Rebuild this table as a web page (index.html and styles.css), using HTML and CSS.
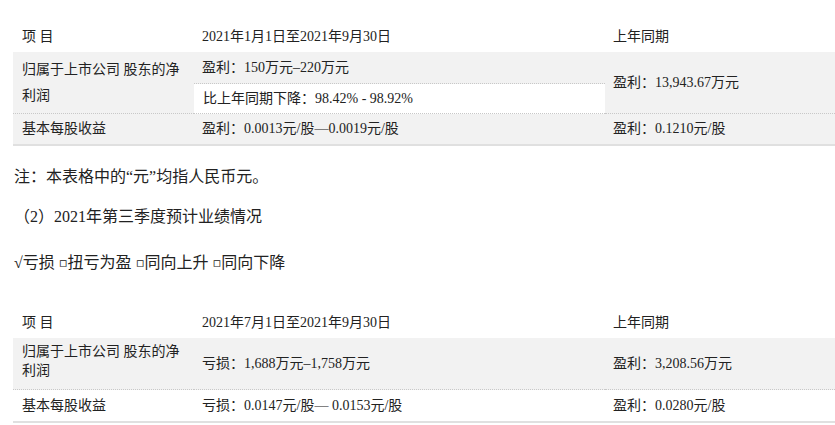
FILE: index.html
```html
<!DOCTYPE html>
<html lang="zh-CN">
<head>
<meta charset="utf-8">
<title>业绩预告</title>
<link rel="stylesheet" href="styles.css">
</head>
<body>
<div class="page">
  <table class="tbl tbl-first">
    <colgroup><col class="c1"><col class="c2"><col class="c3"></colgroup>
    <tr class="head">
      <td>项 目</td>
      <td>2021年1月1日至2021年9月30日</td>
      <td>上年同期</td>
    </tr>
    <tr class="r-a">
      <td rowspan="2" class="name tall">归属于上市公司 股东的净<br>利润</td>
      <td>盈利：150万元–220万元</td>
      <td rowspan="2">盈利：13,943.67万元</td>
    </tr>
    <tr class="r-b">
      <td class="sub">比上年同期下降：98.42% - 98.92%</td>
    </tr>
    <tr class="r-c">
      <td>基本每股收益</td>
      <td>盈利：0.0013元/股—0.0019元/股</td>
      <td>盈利：0.1210元/股</td>
    </tr>
  </table>

  <p class="note">注：本表格中的“元”均指人民币元。</p>
  <p class="sect">（2）2021年第三季度预计业绩情况</p>
  <p class="opts">√亏损 <span class="box">▫</span>扭亏为盈 <span class="box">▫</span>同向上升 <span class="box">▫</span>同向下降</p>

  <table class="tbl tbl-second">
    <colgroup><col class="c1"><col class="c2"><col class="c3"></colgroup>
    <tr class="head">
      <td>项 目</td>
      <td>2021年7月1日至2021年9月30日</td>
      <td>上年同期</td>
    </tr>
    <tr class="r-a2">
      <td class="name short"><div class="name-text">归属于上市公司 股东的净<br>利润</div></td>
      <td>亏损：1,688万元–1,758万元</td>
      <td>盈利：3,208.56万元</td>
    </tr>
    <tr class="r-c2">
      <td>基本每股收益</td>
      <td>亏损：0.0147元/股— 0.0153元/股</td>
      <td>盈利：0.0280元/股</td>
    </tr>
  </table>
</div>
</body>
</html>
```

FILE: styles.css
```css
html, body {
  margin: 0;
  padding: 0;
  overflow: hidden;
  background: #fff;
}

body {
  font-family: "Liberation Serif", "Noto Sans CJK SC", serif;
  font-size: 14px;
  color: #222;
}

.page {
  padding-left: 13px;
}

.tbl {
  border-collapse: collapse;
  width: 822px;
  table-layout: fixed;
}

.tbl-first {
  margin-top: 21px;
}

.tbl-second {
  margin-top: 34px;
}

.c1 { width: 181px; }
.c2 { width: 411px; }
.c3 { width: 230px; }

.tbl td {
  padding: 0 8px;
  line-height: 20px;
  vertical-align: middle;
  white-space: nowrap;
}

.tbl td:first-child {
  padding-left: 9px;
}

.tbl tr:nth-child(even) td {
  background: #f2f2f2;
}

.head td { height: 31px; }
.r-a td { height: 31px; }
.r-b td { height: 29px; }
.r-c td {
  height: 30px;
  border-top: 1px dotted #c8c8c8;
  border-bottom: 2px solid #e0e0e0;
}

.sub {
  border-top: 1px dotted #c8c8c8;
}

.name.tall {
  line-height: 26px;
}

.name-text {
  line-height: 19px;
  margin-bottom: 6px;
}

.r-a2 td { height: 51px; }
.r-c2 td {
  height: 31px;
  border-top: 1px dotted #c8c8c8;
  border-bottom: 2px solid #e0e0e0;
}

.note, .sect, .opts {
  margin: 0;
  padding-left: 1px;
  font-size: 16px;
  line-height: 20px;
}

.note { margin-top: 21px; }
.sect { margin-top: 20px; }
.opts { margin-top: 26px; }

.box {
  font-family: "DejaVu Sans", sans-serif;
  font-size: 13px;
  display: inline-block;
  vertical-align: 1px;
}
```
